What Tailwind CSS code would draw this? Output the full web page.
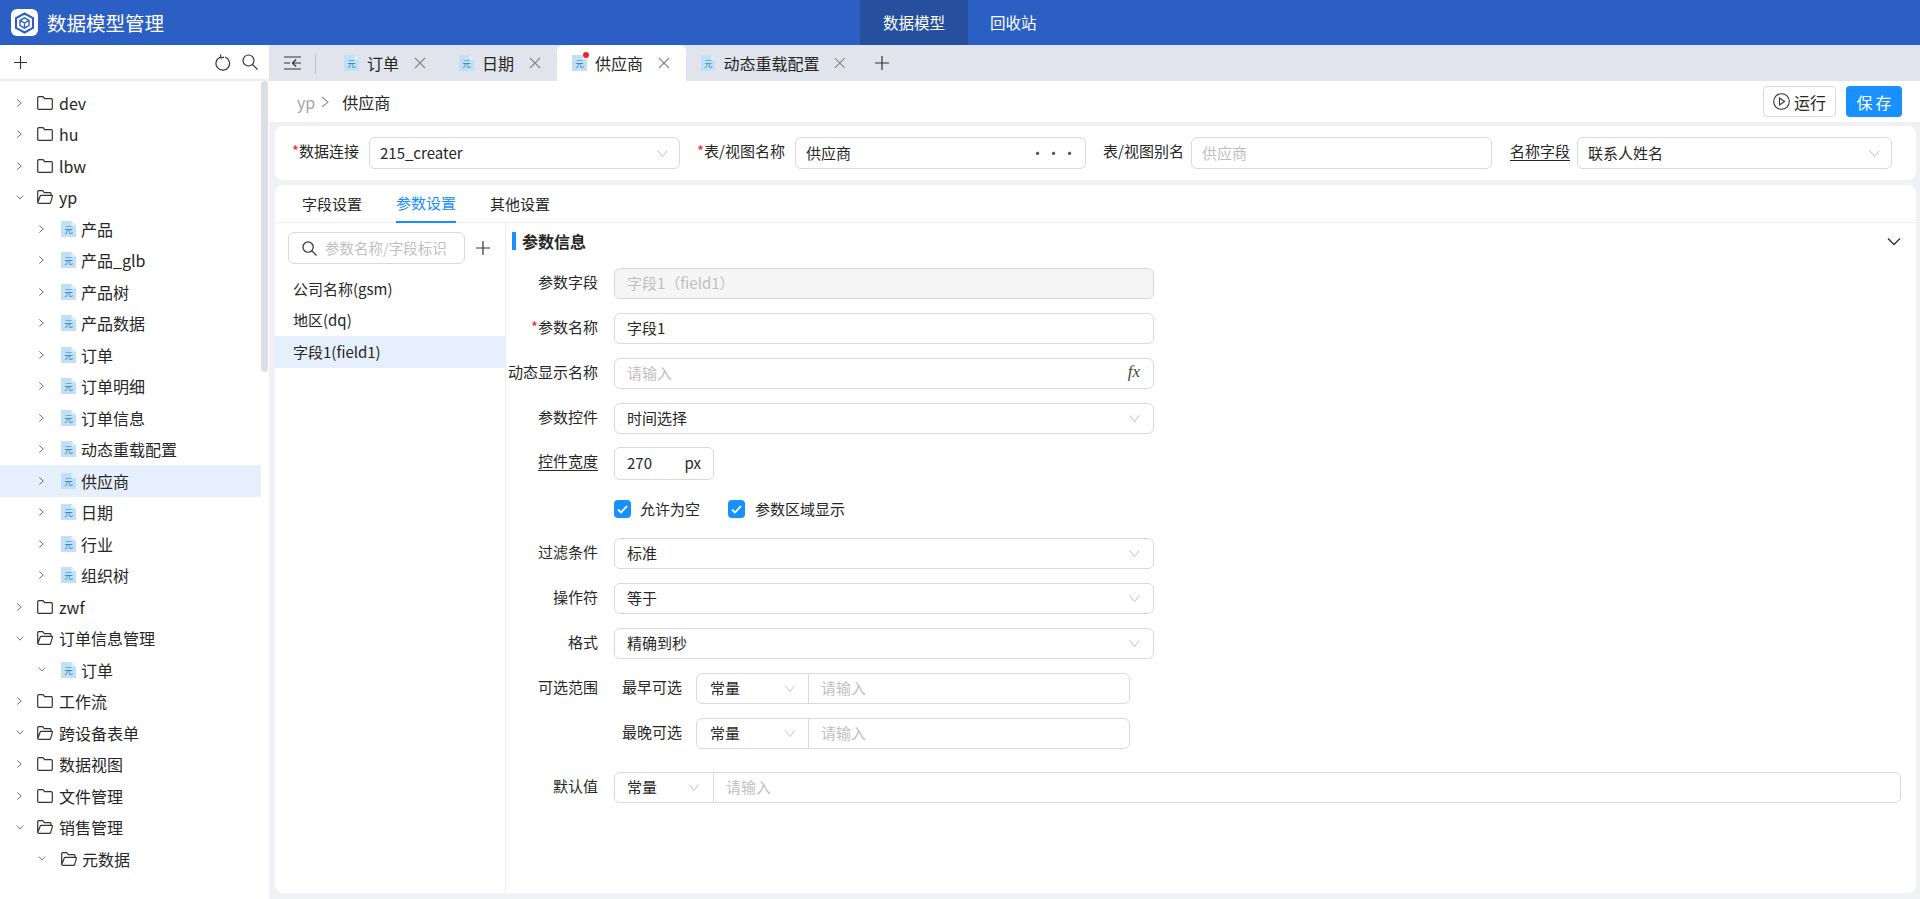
<!DOCTYPE html>
<html lang="zh-CN">
<head>
    <meta charset="UTF-8">
    <title>数据模型管理</title>
    <script src="https://cdn.jsdelivr.net/npm/@tailwindcss/browser@4"></script>
</head>
<body class="h-[899px] overflow-hidden bg-white text-[15px] text-[#262626] font-['Noto_Sans_CJK_SC',sans-serif]">
    <svg class="hidden">
        <symbol id="file" viewBox="0 0 15 16">
            <path d="M0 0H10.500L15 4.500V16H0Z" fill="#c0e0f5"/>
            <path d="M10.500 0L15 4.500H10.500Z" fill="#e3f1fb"/>
            <text x="7.500" y="12" font-size="8.500" text-anchor="middle" fill="#2f7db5" font-family="Noto Sans CJK SC">元</text>
        </symbol>
        <symbol id="folder" viewBox="0 0 16 14">
            <path d="M.7 2V12.300Q.7 13.300 1.700 13.300H14.300Q15.300 13.300 15.300 12.300V3.700Q15.300 2.700 14.300 2.700H7.700L6 .7H1.700Q.7 .7 .7 2Z" fill="none" stroke="#333" stroke-width="1.200"/>
        </symbol>
        <symbol id="open" viewBox="0 0 16 14">
            <path d="M.7 12.800V1.700Q.7 .7 1.700 .7H5.700L7.300 2.700H13Q14 2.700 14 3.700V5.300M.7 12.800Q1 13.300 2 13.300H12.800Q13.300 13.300 13.500 12.800L15.500 6.200Q15.600 5.300 14.800 5.300H4.200Q3.400 5.300 3.200 6Z" fill="none" stroke="#333" stroke-width="1.200"/>
        </symbol>
        <symbol id="right" viewBox="0 0 8 10"><path d="M1.500 1L6 5L1.500 9" fill="none" stroke="#666" stroke-width="1.100"/></symbol>
        <symbol id="down" viewBox="0 0 10 8"><path d="M1 1.500L5 6L9 1.500" fill="none" stroke="#666" stroke-width="1.100"/></symbol>
        <symbol id="sel" viewBox="0 0 14 10"><path d="M1.500 1.500L7 8.500L12.500 1.500" fill="none" stroke="#bfbfbf" stroke-width="1.100"/></symbol>
        <symbol id="close" viewBox="0 0 12 12"><path d="M1 1L11 11M11 1L1 11" fill="none" stroke="#888" stroke-width="1.200"/></symbol>
        <symbol id="plus" viewBox="0 0 14 14"><path d="M7 0V14M0 7H14" fill="none" stroke="#333" stroke-width="1.200"/></symbol>
    </svg>

    <!-- top bar -->
    <header class="h-[45px] bg-[#2b5fc4] flex items-center text-white relative">
        <div class="ml-[11px] w-[27px] h-[27px] bg-white rounded-[6px] flex items-center justify-center">
            <svg width="21" height="22" viewBox="0 0 21 22" fill="none" stroke="#2b5fc4" stroke-width="2">
                <path d="M10.500 1.500L19 6.200V15.800L10.500 20.500L2 15.800V6.200Z"/>
                <path d="M6 8.300L10.500 5.800L15 8.300V13.700L10.500 16.200L6 13.700ZM6 8.300L10.500 11L15 8.300M10.500 11V16.200" stroke-width="1.400"/>
            </svg>
        </div>
        <div class="ml-[9px] text-[19.500px]">数据模型管理</div>
        <nav class="absolute left-[860px] top-0 h-[45px] flex text-[15.500px]">
            <div class="w-[108px] bg-[#264f9e] flex items-center justify-center">数据模型</div>
            <div class="ml-[22px] flex items-center">回收站</div>
        </nav>
    </header>

    <div class="flex h-[854px]">
        <!-- tree sidebar -->
        <aside class="w-[269px] shrink-0 bg-white relative text-[16px]">
            <div class="h-9 border-b-2 border-[#eeeeee] flex items-center">
                <svg class="ml-[14px] w-[13px] h-[13px]"><use href="#plus"/></svg>
                <svg class="ml-[188px]" width="16" height="17" viewBox="0 0 16 17" fill="none" stroke="#333" stroke-width="1.200"><path d="M5 3.200A6.800 6.800 0 1 0 10 3"/><path d="M5.500 .5L5.800 4L9 3.200"/></svg>
                <svg class="ml-[11px]" width="16" height="16" viewBox="0 0 16 16" fill="none" stroke="#333" stroke-width="1.200"><circle cx="6.500" cy="6.500" r="5.500"/><path d="M10.500 10.500L15.500 15.500"/></svg>
            </div>
            <div class="absolute right-[1px] top-9 w-[7px] h-[291px] rounded bg-[#dcdfe4]"></div>
            <ul class="pt-[6px] pr-2 [&>li]:h-[31.500px] [&>li]:flex [&>li]:items-center">
                <li><svg class="ml-4 w-[7px] h-[10px]"><use href="#right"/></svg><svg class="ml-[14px] w-4 h-[14px]"><use href="#folder"/></svg><span class="ml-[6px]">dev</span></li>
                <li><svg class="ml-4 w-[7px] h-[10px]"><use href="#right"/></svg><svg class="ml-[14px] w-4 h-[14px]"><use href="#folder"/></svg><span class="ml-[6px]">hu</span></li>
                <li><svg class="ml-4 w-[7px] h-[10px]"><use href="#right"/></svg><svg class="ml-[14px] w-4 h-[14px]"><use href="#folder"/></svg><span class="ml-[6px]">lbw</span></li>
                <li><svg class="ml-4 w-[8px] h-[7px]"><use href="#down"/></svg><svg class="ml-[13px] w-4 h-[14px]"><use href="#open"/></svg><span class="ml-[6px]">yp</span></li>
                <li><svg class="ml-[38px] w-[7px] h-[10px]"><use href="#right"/></svg><svg class="ml-[16px] w-[15px] h-4"><use href="#file"/></svg><span class="ml-[5px]">产品</span></li>
                <li><svg class="ml-[38px] w-[7px] h-[10px]"><use href="#right"/></svg><svg class="ml-[16px] w-[15px] h-4"><use href="#file"/></svg><span class="ml-[5px]">产品_glb</span></li>
                <li><svg class="ml-[38px] w-[7px] h-[10px]"><use href="#right"/></svg><svg class="ml-[16px] w-[15px] h-4"><use href="#file"/></svg><span class="ml-[5px]">产品树</span></li>
                <li><svg class="ml-[38px] w-[7px] h-[10px]"><use href="#right"/></svg><svg class="ml-[16px] w-[15px] h-4"><use href="#file"/></svg><span class="ml-[5px]">产品数据</span></li>
                <li><svg class="ml-[38px] w-[7px] h-[10px]"><use href="#right"/></svg><svg class="ml-[16px] w-[15px] h-4"><use href="#file"/></svg><span class="ml-[5px]">订单</span></li>
                <li><svg class="ml-[38px] w-[7px] h-[10px]"><use href="#right"/></svg><svg class="ml-[16px] w-[15px] h-4"><use href="#file"/></svg><span class="ml-[5px]">订单明细</span></li>
                <li><svg class="ml-[38px] w-[7px] h-[10px]"><use href="#right"/></svg><svg class="ml-[16px] w-[15px] h-4"><use href="#file"/></svg><span class="ml-[5px]">订单信息</span></li>
                <li><svg class="ml-[38px] w-[7px] h-[10px]"><use href="#right"/></svg><svg class="ml-[16px] w-[15px] h-4"><use href="#file"/></svg><span class="ml-[5px]">动态重载配置</span></li>
                <li class="bg-[#e6f0fc]"><svg class="ml-[38px] w-[7px] h-[10px]"><use href="#right"/></svg><svg class="ml-[16px] w-[15px] h-4"><use href="#file"/></svg><span class="ml-[5px]">供应商</span></li>
                <li><svg class="ml-[38px] w-[7px] h-[10px]"><use href="#right"/></svg><svg class="ml-[16px] w-[15px] h-4"><use href="#file"/></svg><span class="ml-[5px]">日期</span></li>
                <li><svg class="ml-[38px] w-[7px] h-[10px]"><use href="#right"/></svg><svg class="ml-[16px] w-[15px] h-4"><use href="#file"/></svg><span class="ml-[5px]">行业</span></li>
                <li><svg class="ml-[38px] w-[7px] h-[10px]"><use href="#right"/></svg><svg class="ml-[16px] w-[15px] h-4"><use href="#file"/></svg><span class="ml-[5px]">组织树</span></li>
                <li><svg class="ml-4 w-[7px] h-[10px]"><use href="#right"/></svg><svg class="ml-[14px] w-4 h-[14px]"><use href="#folder"/></svg><span class="ml-[6px]">zwf</span></li>
                <li><svg class="ml-4 w-[8px] h-[7px]"><use href="#down"/></svg><svg class="ml-[13px] w-4 h-[14px]"><use href="#open"/></svg><span class="ml-[6px]">订单信息管理</span></li>
                <li><svg class="ml-[38px] w-[8px] h-[7px]"><use href="#down"/></svg><svg class="ml-[15px] w-[15px] h-4"><use href="#file"/></svg><span class="ml-[5px]">订单</span></li>
                <li><svg class="ml-4 w-[7px] h-[10px]"><use href="#right"/></svg><svg class="ml-[14px] w-4 h-[14px]"><use href="#folder"/></svg><span class="ml-[6px]">工作流</span></li>
                <li><svg class="ml-4 w-[8px] h-[7px]"><use href="#down"/></svg><svg class="ml-[13px] w-4 h-[14px]"><use href="#open"/></svg><span class="ml-[6px]">跨设备表单</span></li>
                <li><svg class="ml-4 w-[7px] h-[10px]"><use href="#right"/></svg><svg class="ml-[14px] w-4 h-[14px]"><use href="#folder"/></svg><span class="ml-[6px]">数据视图</span></li>
                <li><svg class="ml-4 w-[7px] h-[10px]"><use href="#right"/></svg><svg class="ml-[14px] w-4 h-[14px]"><use href="#folder"/></svg><span class="ml-[6px]">文件管理</span></li>
                <li><svg class="ml-4 w-[8px] h-[7px]"><use href="#down"/></svg><svg class="ml-[13px] w-4 h-[14px]"><use href="#open"/></svg><span class="ml-[6px]">销售管理</span></li>
                <li><svg class="ml-[38px] w-[8px] h-[7px]"><use href="#down"/></svg><svg class="ml-[15px] w-4 h-[14px]"><use href="#open"/></svg><span class="ml-[5px]">元数据</span></li>
            </ul>
        </aside>

        <main class="flex-1 bg-[#f0f1f5] flex flex-col">
            <!-- tab strip -->
            <div class="h-9 bg-[#e1e4ec] flex items-center text-[16px] whitespace-nowrap">
                <svg class="ml-[15px]" width="18" height="14" viewBox="0 0 18 14" fill="none" stroke="#333" stroke-width="1.200"><path d="M0 1H17M0 13H17M0 7H6M17 7H9M12 3.500L8.500 7L12 10.500"/></svg>
                <div class="ml-[13px] w-px h-[21px] bg-[#bfc3cc]"></div>
                <div class="ml-[13px] w-[115px] h-9 pl-[15px] flex items-center"><svg class="w-[15px] h-4"><use href="#file"/></svg><span class="ml-2">订单</span><svg class="ml-[15px] w-3 h-3"><use href="#close"/></svg></div>
                <div class="w-[113px] h-9 pl-[15px] flex items-center"><svg class="w-[15px] h-4"><use href="#file"/></svg><span class="ml-2">日期</span><svg class="ml-[15px] w-3 h-3"><use href="#close"/></svg></div>
                <div class="w-[129px] h-9 pl-[15px] flex items-center bg-white rounded-t-md relative"><svg class="w-[15px] h-4"><use href="#file"/></svg><span class="absolute left-[26px] top-[7px] w-[6px] h-[6px] rounded-full bg-[#f5222d]"></span><span class="ml-2">供应商</span><svg class="ml-[15px] w-3 h-3"><use href="#close"/></svg></div>
                <div class="w-[160px] h-9 pl-[15px] flex items-center"><svg class="w-[15px] h-4"><use href="#file"/></svg><span class="ml-2">动态重载配置</span><svg class="ml-[15px] w-3 h-3"><use href="#close"/></svg></div>
                <svg class="ml-[29px] w-[14px] h-[14px]"><use href="#plus"/></svg>
            </div>

            <!-- breadcrumb and actions -->
            <div class="h-[41px] bg-white flex items-center text-[16px]">
                <span class="ml-[28px] text-[#a6a6a6]">yp</span>
                <svg class="ml-[6px] w-[8px] h-[12px]" viewBox="0 0 8 12" fill="none" stroke="#999" stroke-width="1.200"><path d="M1 1L7 6L1 11"/></svg>
                <span class="ml-[13px]">供应商</span>
                <div class="ml-auto flex items-center gap-[10px] mr-[18px]">
                    <div class="w-[73px] h-[31px] border border-[#d9d9d9] rounded flex items-center justify-center">
                        <svg width="17" height="17" viewBox="0 0 17 17" fill="none" stroke="#333" stroke-width="1.100"><circle cx="8.500" cy="8.500" r="7.800"/><path d="M6.500 5L11.500 8.500L6.500 12Z"/></svg>
                        <span class="ml-1">运行</span>
                    </div>
                    <div class="w-[56px] h-[31px] bg-[#1890ff] text-white rounded flex items-center justify-center tracking-[3px] pl-[3px]">保存</div>
                </div>
            </div>

            <!-- connection card -->
            <div class="mt-1 ml-[6px] mr-1 h-[54px] bg-white rounded-lg flex items-center pl-[17px]">
                <label class="w-[69px] -mt-[3px] whitespace-nowrap"><span class="text-[#f5222d]">*</span>数据连接</label>
                <div class="ml-2 w-[311px] h-8 border border-[#d9d9d9] rounded-md px-[10px] flex items-center justify-between"><span>215_creater</span><svg class="w-[13px] h-[9px]"><use href="#sel"/></svg></div>
                <label class="ml-[17px] w-[90px] -mt-[3px] whitespace-nowrap"><span class="text-[#f5222d]">*</span>表/视图名称</label>
                <div class="ml-2 w-[291px] h-8 border border-[#d9d9d9] rounded-md px-[10px] flex items-center justify-between"><span>供应商</span><span class="text-[#555] tracking-[1px] -mr-[3px]">···</span></div>
                <label class="ml-[17px] w-[80px] -mt-[3px] whitespace-nowrap">表/视图别名</label>
                <div class="ml-2 w-[301px] h-8 border border-[#d9d9d9] rounded-md px-[10px] flex items-center text-[#bfbfbf]">供应商</div>
                <label class="ml-[18px] w-[60px] -mt-[3px] whitespace-nowrap underline underline-offset-[3px]">名称字段</label>
                <div class="ml-[7px] w-[315px] h-8 border border-[#d9d9d9] rounded-md px-[10px] flex items-center justify-between"><span>联系人姓名</span><svg class="w-[13px] h-[9px]"><use href="#sel"/></svg></div>
            </div>

            <!-- parameter card -->
            <div class="mt-[5px] ml-[6px] mr-1 h-[708px] bg-white rounded-lg flex flex-col">
                <div class="h-[38px] shrink-0 border-b border-[#eeeeee] flex pl-[27px] gap-[34px]">
                    <div class="h-[38px] flex items-center">字段设置</div>
                    <div class="h-[38px] flex items-center text-[#1890ff] border-b-2 border-[#1890ff]">参数设置</div>
                    <div class="h-[38px] flex items-center">其他设置</div>
                </div>
                <div class="flex flex-1">
                    <div class="w-[231px] shrink-0 border-r border-[#eeeeee]">
                        <div class="mt-[9px] ml-[13px] flex items-center">
                            <div class="w-[177px] h-8 border border-[#d9d9d9] rounded-md flex items-center pl-[13px] text-[#bfbfbf] text-[14.500px] whitespace-nowrap">
                                <svg class="shrink-0" width="15" height="15" viewBox="0 0 16 16" fill="none" stroke="#333" stroke-width="1.300"><circle cx="6.500" cy="6.500" r="5.500"/><path d="M10.500 10.500L15.500 15.500"/></svg>
                                <span class="ml-2">参数名称/字段标识</span>
                            </div>
                            <svg class="ml-[11px] w-[14px] h-[14px]"><use href="#plus"/></svg>
                        </div>
                        <ul class="mt-[9px] [&>li]:h-[31.500px] [&>li]:flex [&>li]:items-center [&>li]:pl-[18px]">
                            <li>公司名称(gsm)</li>
                            <li>地区(dq)</li>
                            <li class="bg-[#e6f0fc]">字段1(field1)</li>
                        </ul>
                    </div>

                    <div class="flex-1 relative">
                        <div class="mt-[9px] h-[18px] flex items-center pl-[6px]">
                            <div class="w-1 h-[18px] bg-[#1890ff]"></div>
                            <div class="ml-[6px] text-[16px] font-bold">参数信息</div>
                            <svg class="ml-auto mr-[15px] w-[14px] h-[9px]" viewBox="0 0 14 9" fill="none" stroke="#333" stroke-width="1.400"><path d="M1 1.500L7 7.500L13 1.500"/></svg>
                        </div>

                        <div class="mt-[18px] flex flex-col gap-[14px]">
                            <div class="flex items-start">
                                <label class="w-[92px] text-right leading-7">参数字段</label>
                                <div class="ml-4 w-[540px] h-[31px] border border-[#d9d9d9] rounded-md bg-[#f5f5f5] px-3 flex items-center text-[#bfbfbf]">字段1（field1）</div>
                            </div>
                            <div class="flex items-start">
                                <label class="w-[92px] text-right leading-7"><span class="text-[#f5222d]">*</span>参数名称</label>
                                <div class="ml-4 w-[540px] h-[31px] border border-[#d9d9d9] rounded-md px-3 flex items-center">字段1</div>
                            </div>
                            <div class="flex items-start">
                                <label class="w-[92px] text-right leading-7 whitespace-nowrap">动态显示名称</label>
                                <div class="ml-4 w-[540px] h-[31px] border border-[#d9d9d9] rounded-md px-3 flex items-center justify-between text-[#bfbfbf]"><span>请输入</span><span class="font-['Liberation_Serif',serif] italic text-[#444] text-[17px] -mt-1 mr-[1px]">fx</span></div>
                            </div>
                            <div class="flex items-start">
                                <label class="w-[92px] text-right leading-7">参数控件</label>
                                <div class="ml-4 w-[540px] h-[31px] border border-[#d9d9d9] rounded-md px-3 flex items-center justify-between"><span>时间选择</span><svg class="w-[13px] h-[9px]"><use href="#sel"/></svg></div>
                            </div>
                            <div class="flex items-start -mt-[1px]">
                                <label class="w-[92px] text-right leading-7 underline underline-offset-[3px]">控件宽度</label>
                                <div class="ml-4 w-[100px] h-[33px] border border-[#d9d9d9] rounded-md px-3 flex items-center justify-between"><span>270</span><span>px</span></div>
                            </div>
                            <div class="flex items-center ml-[108px] h-[18px] mt-[6px] mb-[6px]">
                                <span class="w-[17px] h-[18px] rounded-[4px] bg-[#1890ff] flex items-center justify-center"><svg width="11" height="9" viewBox="0 0 11 9" fill="none" stroke="#fff" stroke-width="1.800"><path d="M1 4.500L4 7.500L10 1"/></svg></span>
                                <span class="ml-[9px]">允许为空</span>
                                <span class="ml-[28px] w-[17px] h-[18px] rounded-[4px] bg-[#1890ff] flex items-center justify-center"><svg width="11" height="9" viewBox="0 0 11 9" fill="none" stroke="#fff" stroke-width="1.800"><path d="M1 4.500L4 7.500L10 1"/></svg></span>
                                <span class="ml-[10px]">参数区域显示</span>
                            </div>
                            <div class="flex items-start">
                                <label class="w-[92px] text-right leading-7">过滤条件</label>
                                <div class="ml-4 w-[540px] h-[31px] border border-[#d9d9d9] rounded-md px-3 flex items-center justify-between"><span>标准</span><svg class="w-[13px] h-[9px]"><use href="#sel"/></svg></div>
                            </div>
                            <div class="flex items-start">
                                <label class="w-[92px] text-right leading-7">操作符</label>
                                <div class="ml-4 w-[540px] h-[31px] border border-[#d9d9d9] rounded-md px-3 flex items-center justify-between"><span>等于</span><svg class="w-[13px] h-[9px]"><use href="#sel"/></svg></div>
                            </div>
                            <div class="flex items-start">
                                <label class="w-[92px] text-right leading-7">格式</label>
                                <div class="ml-4 w-[540px] h-[31px] border border-[#d9d9d9] rounded-md px-3 flex items-center justify-between"><span>精确到秒</span><svg class="w-[13px] h-[9px]"><use href="#sel"/></svg></div>
                            </div>
                            <div class="flex items-start">
                                <label class="w-[92px] text-right leading-7">可选范围</label>
                                <label class="ml-6 w-[60px] leading-7">最早可选</label>
                                <div class="ml-[14px] w-[434px] h-[31px] border border-[#d9d9d9] rounded-md flex items-center">
                                    <div class="w-[112px] h-full pl-[13px] pr-3 border-r border-[#d9d9d9] flex items-center justify-between"><span>常量</span><svg class="w-[12px] h-[9px]"><use href="#sel"/></svg></div>
                                    <span class="ml-3 text-[#bfbfbf]">请输入</span>
                                </div>
                            </div>
                            <div class="flex items-start">
                                <label class="ml-[116px] w-[60px] leading-7">最晚可选</label>
                                <div class="ml-[14px] w-[434px] h-[31px] border border-[#d9d9d9] rounded-md flex items-center">
                                    <div class="w-[112px] h-full pl-[13px] pr-3 border-r border-[#d9d9d9] flex items-center justify-between"><span>常量</span><svg class="w-[12px] h-[9px]"><use href="#sel"/></svg></div>
                                    <span class="ml-3 text-[#bfbfbf]">请输入</span>
                                </div>
                            </div>
                            <div class="flex items-start mt-[9px]">
                                <label class="w-[92px] text-right leading-7">默认值</label>
                                <div class="ml-4 w-[1287px] h-[31px] border border-[#d9d9d9] rounded-md flex items-center">
                                    <div class="w-[99px] h-full pl-3 pr-[13px] border-r border-[#d9d9d9] flex items-center justify-between"><span>常量</span><svg class="w-[12px] h-[9px]"><use href="#sel"/></svg></div>
                                    <span class="ml-3 text-[#bfbfbf]">请输入</span>
                                </div>
                            </div>
                        </div>
                    </div>
                </div>
            </div>
        </main>
    </div>
</body>
</html>
